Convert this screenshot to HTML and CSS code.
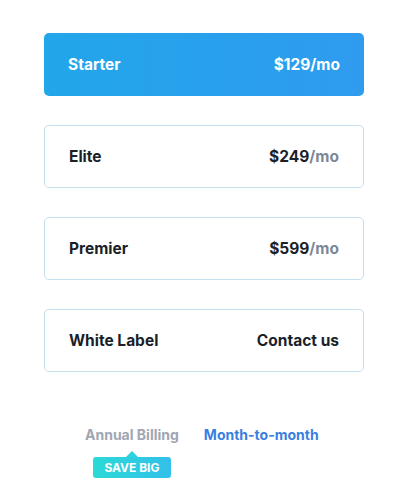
FILE: index.html
```html
<!DOCTYPE html>
<html>
<head>
<meta charset="utf-8">
<link rel="stylesheet" href="styles.css">
</head>
<body>
<div class="plans">
  <div class="plan plan-active"><span class="name">Starter</span><span class="price">$129<span class="per">/mo</span></span></div>
  <div class="plan"><span class="name">Elite</span><span class="price">$249<span class="per">/mo</span></span></div>
  <div class="plan"><span class="name">Premier</span><span class="price">$599<span class="per">/mo</span></span></div>
  <div class="plan"><span class="name">White Label</span><span class="price">Contact us</span></div>
</div>
<div class="billing">
  <div class="opt">
    <span class="annual">Annual Billing</span>
    <span class="badge">SAVE BIG</span>
  </div>
  <span class="monthly">Month-to-month</span>
</div>
</body>
</html>
```
FILE: styles.css
```css
html, body { margin: 0; padding: 0; background: #fff; }
body { font-family: "Inter", "Open Sans", sans-serif; }
.plans {
  margin: 33px 0 0 44px;
  width: 320px;
  display: flex;
  flex-direction: column;
  gap: 29px;
}
.plan {
  box-sizing: border-box;
  height: 63px;
  border: 1px solid #c4e0ee;
  border-radius: 5px;
  display: flex;
  align-items: center;
  justify-content: space-between;
  padding: 0 24px;
  font-weight: 700;
  font-size: 15.5px;
  color: #1b1f2a;
}
.plan-active {
  border: none;
  background: linear-gradient(90deg, #22a6ea, #2f9bef);
  color: #fff;
}
.per { color: #7e8797; }
.plan-active .per { color: #fff; }
.billing {
  margin: 54px 0 0 85px;
  display: flex;
  gap: 25px;
  font-size: 14px;
  font-weight: 700;
}
.opt { display: flex; flex-direction: column; align-items: center; }
.annual { color: #a0a6b3; }
.monthly { color: #3a80e0; }
.badge {
  position: relative;
  margin-top: 14px;
  width: 78px;
  height: 21px;
  box-sizing: border-box;
  display: flex;
  align-items: center;
  justify-content: center;
  border-radius: 3px;
  background: linear-gradient(90deg, #2adad6, #33c0ea);
  color: #fff;
  font-size: 12px;
  font-weight: 700;
}
.badge::before {
  content: "";
  position: absolute;
  top: -6px;
  left: 50%;
  margin-left: -6px;
  border-left: 6px solid transparent;
  border-right: 6px solid transparent;
  border-bottom: 6px solid #2ed2dc;
}
```
